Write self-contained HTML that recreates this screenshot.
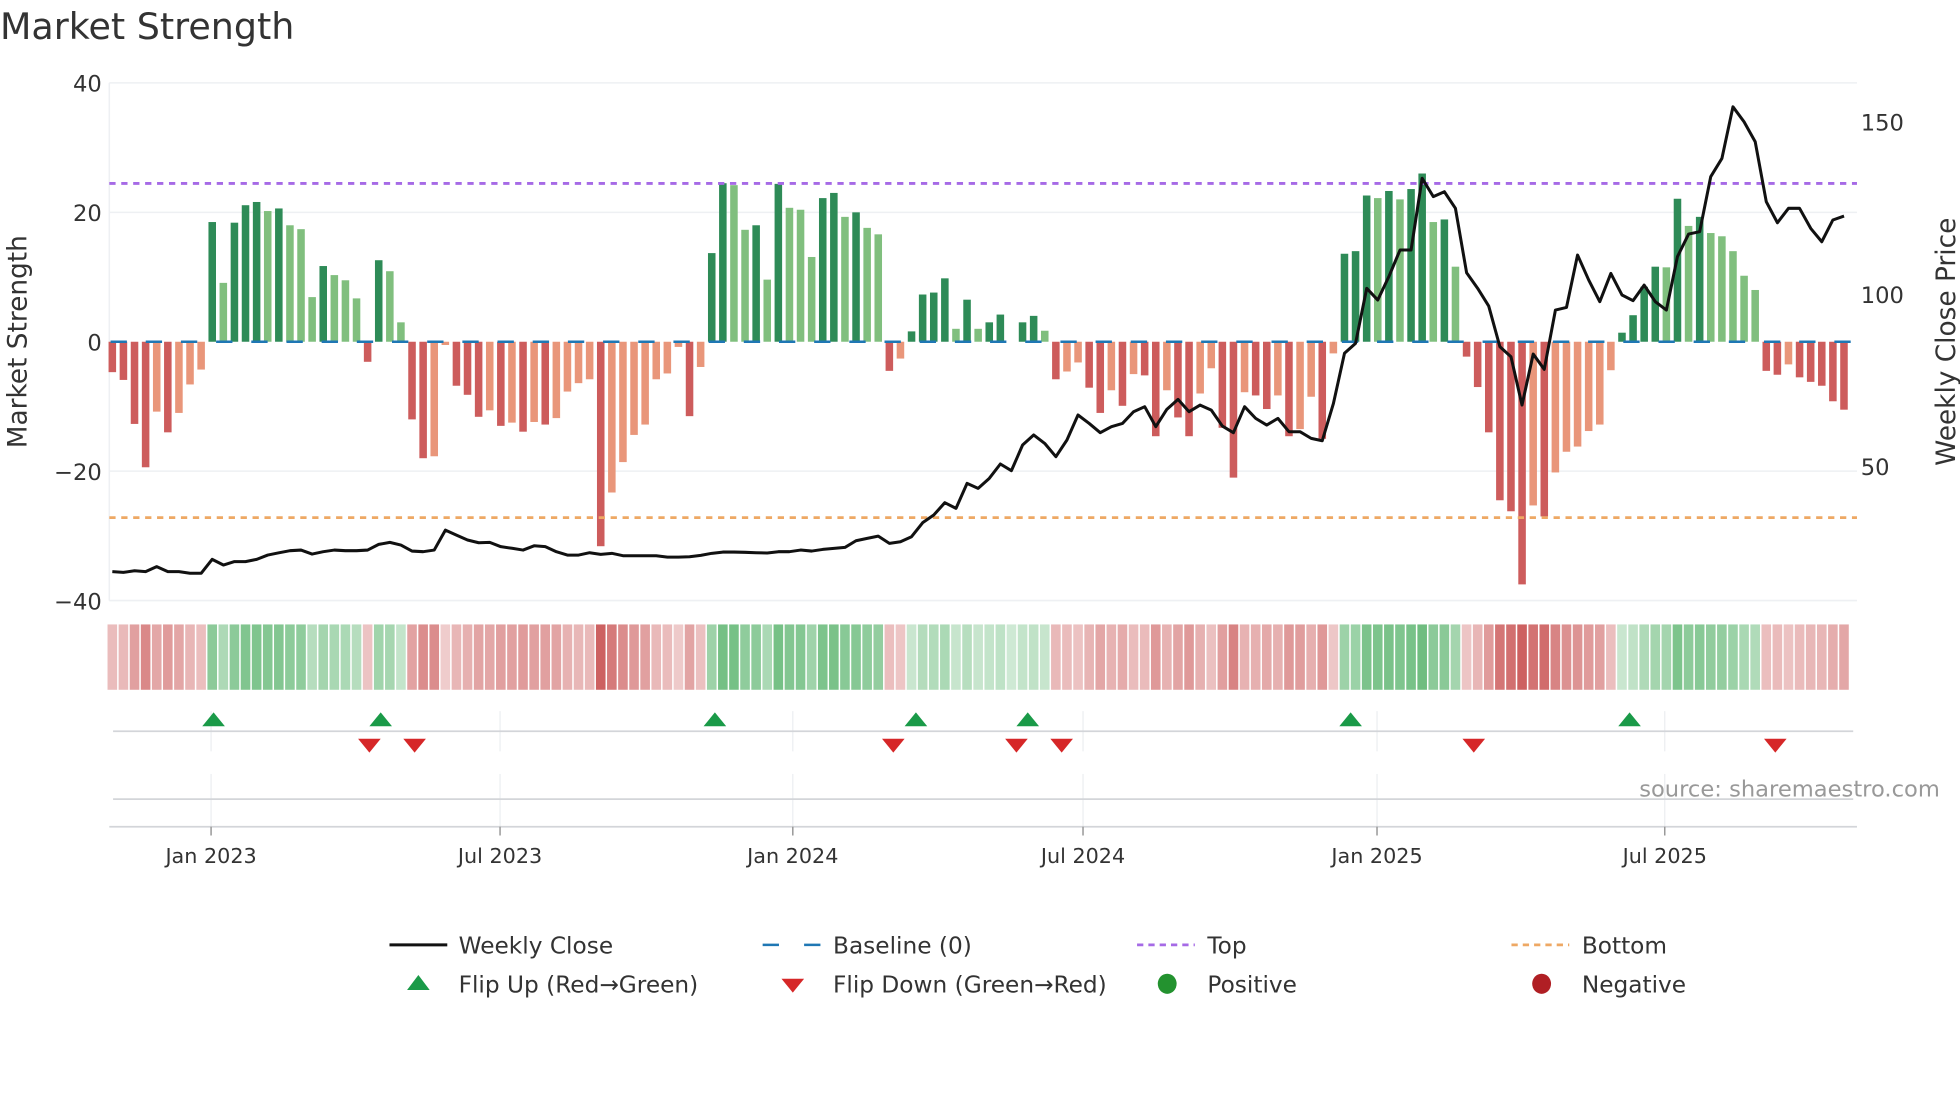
<!DOCTYPE html>
<html><head><meta charset="utf-8">
<style>
html,body{margin:0;padding:0;background:#fff;}
svg{display:block;}
text{font-family:"DejaVu Sans","Liberation Sans",sans-serif;fill:#333;}
</style></head>
<body>
<svg id="s" width="1960" height="1102" viewBox="0 0 1560 877.1" xmlns="http://www.w3.org/2000/svg">
<rect width="1560" height="877.1" fill="#fff"/>
<text x="0" y="31" font-size="29">Market Strength</text>
<g stroke="#eef0f3" stroke-width="1.2">
<line x1="87" y1="66" x2="1478" y2="66"/>
<line x1="87" y1="169" x2="1478" y2="169"/>
<line x1="87" y1="375" x2="1478" y2="375"/>
<line x1="87" y1="478" x2="1478" y2="478"/>
<line x1="87" y1="66" x2="87" y2="478"/>
</g>
<g id="bars"></g>
<line x1="87" y1="146" x2="1478" y2="146" stroke="#a66ae6" stroke-width="2.2" stroke-dasharray="5,4.5"/>
<line x1="87" y1="412" x2="1478" y2="412" stroke="#eea864" stroke-width="2.2" stroke-dasharray="5,4.5"/>
<line x1="88" y1="272" x2="1478" y2="272" stroke="#1f77b4" stroke-width="2" stroke-dasharray="13,15"/>
<polyline id="price" fill="none" stroke="#111" stroke-width="2.4" stroke-linejoin="round"/>
<g id="heat"></g>
<g font-size="18" text-anchor="end">
<text x="81" y="73">40</text>
<text x="81" y="176">20</text>
<text x="81" y="279">0</text>
<text x="81" y="382">−20</text>
<text x="81" y="485">−40</text>
</g>
<g font-size="18">
<text x="1481" y="104">150</text>
<text x="1481" y="241">100</text>
<text x="1481" y="378">50</text>
</g>
<text font-size="21" text-anchor="middle" transform="translate(21,272) rotate(-90)">Market Strength</text>
<text font-size="21" text-anchor="middle" transform="translate(1556,272) rotate(-90)">Weekly Close Price</text>
<g stroke="#eceef1" stroke-width="1">
<line x1="168" y1="566" x2="168" y2="598"/><line x1="398" y1="566" x2="398" y2="598"/><line x1="631" y1="566" x2="631" y2="598"/><line x1="862" y1="566" x2="862" y2="598"/><line x1="1096" y1="566" x2="1096" y2="598"/><line x1="1325" y1="566" x2="1325" y2="598"/>
<line x1="168" y1="616" x2="168" y2="658"/><line x1="398" y1="616" x2="398" y2="658"/><line x1="631" y1="616" x2="631" y2="658"/><line x1="862" y1="616" x2="862" y2="658"/><line x1="1096" y1="616" x2="1096" y2="658"/><line x1="1325" y1="616" x2="1325" y2="658"/>
</g>
<line x1="90" y1="582" x2="1475" y2="582" stroke="#d3d5d9" stroke-width="1.4"/>
<line x1="90" y1="636" x2="1475" y2="636" stroke="#d3d5d9" stroke-width="1.4"/>
<line x1="87" y1="658" x2="1478" y2="658" stroke="#d3d5d9" stroke-width="1.4"/>
<g stroke="#999" stroke-width="1.2">
<line x1="168" y1="658" x2="168" y2="665"/><line x1="398" y1="658" x2="398" y2="665"/><line x1="631" y1="658" x2="631" y2="665"/><line x1="862" y1="658" x2="862" y2="665"/><line x1="1096" y1="658" x2="1096" y2="665"/><line x1="1325" y1="658" x2="1325" y2="665"/>
</g>
<g id="flips"></g>
<text x="1544" y="634" font-size="18" text-anchor="end" style="fill:#999">source: sharemaestro.com</text>
<g font-size="16.5" text-anchor="middle">
<text x="168" y="687">Jan 2023</text><text x="398" y="687">Jul 2023</text><text x="631" y="687">Jan 2024</text><text x="862" y="687">Jul 2024</text><text x="1096" y="687">Jan 2025</text><text x="1325" y="687">Jul 2025</text>
</g>
<g font-size="18.5">
<line x1="310" y1="752" x2="356" y2="752" stroke="#111" stroke-width="2.4"/>
<text x="365" y="759">Weekly Close</text>
<line x1="607" y1="752" x2="653" y2="752" stroke="#1f77b4" stroke-width="2" stroke-dasharray="13,20"/>
<text x="663" y="759">Baseline (0)</text>
<line x1="905" y1="752" x2="951" y2="752" stroke="#a66ae6" stroke-width="2.2" stroke-dasharray="5,4"/>
<text x="961" y="759">Top</text>
<line x1="1203" y1="752" x2="1249" y2="752" stroke="#eea864" stroke-width="2.2" stroke-dasharray="5,4"/>
<text x="1259" y="759">Bottom</text>
<polygon points="324,788 342,788 333,776" fill="#1a9a48"/>
<text x="365" y="790">Flip Up (Red→Green)</text>
<polygon points="622,779 640,779 631,790" fill="#d62728"/>
<text x="663" y="790">Flip Down (Green→Red)</text>
<ellipse cx="929" cy="783" rx="7.5" ry="8" fill="#23922f"/>
<text x="961" y="790">Positive</text>
<ellipse cx="1227" cy="783" rx="7.5" ry="8" fill="#b01f24"/>
<text x="1259" y="790">Negative</text>
</g>
</svg>
<script>
var V=[[-4.7,'R'],[-5.9,'R'],[-12.7,'R'],[-19.4,'R'],[-10.8,'L'],[-14,'R'],[-11,'L'],[-6.6,'L'],[-4.3,'L'],[18.5,'D'],[9.1,'L'],[18.4,'D'],[21.1,'D'],[21.6,'D'],[20.2,'L'],[20.6,'D'],[18,'L'],[17.4,'L'],[6.9,'L'],[11.7,'D'],[10.3,'L'],[9.5,'L'],[6.7,'L'],[-3.1,'R'],[12.6,'D'],[10.9,'L'],[3,'L'],[-12,'R'],[-18,'R'],[-17.7,'L'],[-0.5,'L'],[-6.8,'R'],[-8.2,'R'],[-11.6,'R'],[-10.6,'L'],[-13,'R'],[-12.5,'L'],[-13.9,'R'],[-12.4,'L'],[-12.8,'R'],
[-11.8,'L'],[-7.7,'L'],[-6.4,'L'],[-5.8,'L'],[-31.6,'R'],[-23.3,'L'],[-18.6,'L'],[-14.4,'L'],[-12.8,'L'],[-5.8,'L'],[-4.9,'L'],[-0.8,'L'],[-11.5,'R'],[-3.9,'L'],[13.7,'D'],[24.5,'D'],[24.2,'L'],[17.3,'L'],[18,'D'],[9.6,'L'],[24.4,'D'],[20.7,'L'],[20.4,'L'],[13.1,'L'],[22.2,'D'],[23,'D'],[19.3,'L'],[20,'D'],[17.6,'L'],[16.6,'L'],[-4.5,'R'],[-2.6,'L'],[1.6,'D'],[7.3,'D'],[7.6,'D'],[9.8,'D'],[2,'L'],[6.5,'D'],[2,'L'],[3,'D'],[4.2,'D'],[0,'L'],[3,'D'],[4,'D'],[1.7,'L'],
[-5.8,'R'],[-4.6,'L'],[-3.2,'L'],[-7.1,'R'],[-11,'R'],[-7.5,'L'],[-9.9,'R'],[-5,'L'],[-5.2,'R'],[-14.6,'R'],[-7.5,'L'],[-11.7,'R'],[-14.6,'R'],[-8,'L'],[-4.1,'L'],[-13.3,'R'],[-21,'R'],[-7.8,'L'],[-8.3,'R'],[-10.4,'R'],[-8.3,'L'],[-14.6,'R'],[-13.5,'L'],[-8.5,'L'],[-15,'R'],[-1.8,'L'],[13.6,'D'],[14,'D'],[22.6,'D'],[22.2,'L'],[23.3,'D'],[22,'L'],[23.6,'D'],[26,'D'],[18.5,'L'],[18.9,'D'],[11.6,'L'],
[-2.3,'R'],[-7,'R'],[-14,'R'],[-24.5,'R'],[-26.2,'R'],[-37.5,'R'],[-25.3,'L'],[-27,'R'],[-20.2,'L'],[-17,'L'],[-16.2,'L'],[-13.8,'L'],[-12.8,'L'],[-4.4,'L'],[1.4,'D'],[4.1,'D'],[8.5,'D'],[11.6,'D'],[11.5,'L'],[22.1,'D'],[17.9,'L'],[19.3,'D'],[16.8,'L'],[16.3,'L'],[14,'L'],[10.2,'L'],[8,'L'],[-4.5,'R'],[-5.1,'R'],[-3.5,'L'],[-5.5,'R'],[-6.2,'R'],[-6.8,'R'],[-9.2,'R'],[-10.5,'R']];
var P=[455,455.6,454.3,455,451,455,455,456.3,456.3,445.2,449.7,447,447,445.2,441.8,440,438.3,437.8,441,439.1,437.8,438.3,438.3,437.8,433.3,431.7,433.8,438.6,439.1,437.8,421.9,425.9,429.8,432,431.7,435.1,436.4,437.8,434.4,435.1,
439.1,441.8,441.8,439.9,441.2,440.4,442.3,442.3,442.3,442.3,443.4,443.4,443.1,442,440.4,439.4,439.4,439.6,439.9,440.1,439.1,439.1,437.8,438.6,437.3,436.5,435.7,430.4,428.5,426.7,432.5,431.2,427.2,416,409.9,400.1,404.6,384.7,388.7,380.7,369.3,374.6,
354.2,346.2,352.9,363.5,350.2,330.3,337,344.4,339.6,337,327.7,323.7,339.6,325.8,317.9,327.7,322.4,326.4,339.1,344.4,323.7,333,338.3,333,343.6,343.6,348.9,350.8,321.1,281.2,273.3,229.5,238.8,220.2,199,199,141.9,156.5,152.6,165.8,
217.1,229.5,243.6,276,283.9,322.4,281.8,294,246.8,244.7,203,222.9,240.1,217.6,234.8,239.3,226.9,240.1,246.8,204.3,186.3,184.4,140.6,126.1,85,96.9,112.8,160.5,177.3,165.8,165.8,181.8,192.4,175.1,172];
var NS="http://www.w3.org/2000/svg",x0=89.4,dx=8.835,col={D:'#2e8b57',L:'#80bf7e',R:'#cd5c5c',S:'#e9967a'};
var bars=document.getElementById('bars'),heat=document.getElementById('heat'),pts=[];
function el(t,a,p){var e=document.createElementNS(NS,t);for(var k in a)e.setAttribute(k,a[k]);p.appendChild(e);return e;}
for(var i=0;i<V.length;i++){
 var v=V[i][0],c=V[i][1],x=x0+i*dx;
 if(v<0&&c=='L')c='S';
 var h=Math.abs(v)*5.15;
 if(h>0.1) el('rect',{x:x-3,y:v>0?272-h:272,width:6,height:h,fill:col[c]},bars);
 var a=0.28+0.62*Math.min(Math.abs(v)/30,1);
 var f=v>=0?'rgba(80,175,100,'+a.toFixed(2)+')':'rgba(200,80,80,'+a.toFixed(2)+')';
 el('rect',{x:x-dx/2+0.6,y:497,width:dx-1.2,height:52,fill:f},heat);
 pts.push(x.toFixed(1)+','+P[i]);
}
document.getElementById('price').setAttribute('points',pts.join(' '));
var fl=document.getElementById('flips');
[170,303,569,729,818,1075,1297].forEach(function(x){el('polygon',{points:(x-9)+',578 '+(x+9)+',578 '+x+',567',fill:'#1a9a48'},fl);});
[294,330,711,809,845,1173,1413].forEach(function(x){el('polygon',{points:(x-9)+',588 '+(x+9)+',588 '+x+',599',fill:'#d62728'},fl);});
</script>
</body></html>
